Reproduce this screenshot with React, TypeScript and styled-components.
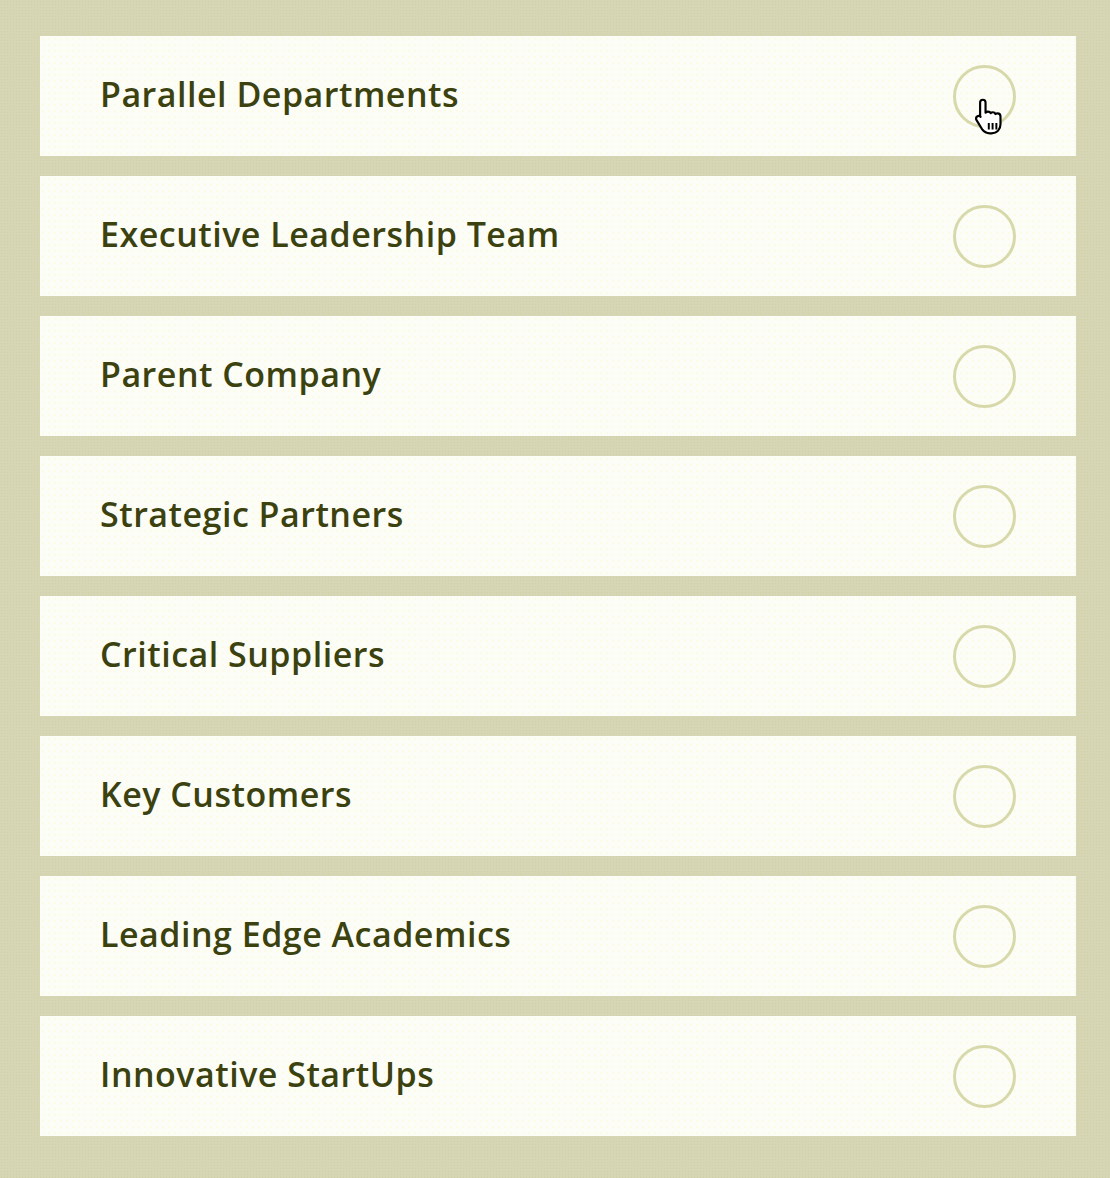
import styled, { createGlobalStyle } from "styled-components";

const GlobalStyle = createGlobalStyle`
  html, body {
    margin: 0;
    padding: 0;
  }

  body {
    background-color: #d6d5b4;
    background-image: radial-gradient(#cfcfa8 1px, transparent 1px);
    background-size: 3px 3px;
    font-family: "Open Sans", "Noto Sans", sans-serif;
  }
`;

const Page = styled.div`
  width: 1110px;
  min-height: 1178px;
  box-sizing: border-box;
  padding: 36px 34px 42px 40px;
`;

const List = styled.ul`
  list-style: none;
  margin: 0;
  padding: 0;
  display: flex;
  flex-direction: column;
  gap: 20px;
`;

const Item = styled.li`
  position: relative;
  height: 120px;
  box-sizing: border-box;
  padding: 0 60px 0 60px;
  display: flex;
  align-items: center;
  justify-content: space-between;
  background-color: #fdfdf8;
  background-image: radial-gradient(#fbfbe6 1px, transparent 1px);
  background-size: 6px 6px;
  cursor: pointer;
`;

const Label = styled.span`
  color: #3b4210;
  font-size: 34px;
  font-weight: 600;
  letter-spacing: 0.5px;
  margin-bottom: 4px;
`;

const Radio = styled.span`
  width: 63px;
  height: 63px;
  box-sizing: border-box;
  border: 3px solid #d7d9ab;
  border-radius: 50%;
`;

const Cursor = styled.svg`
  position: absolute;
  right: 67px;
  top: 61px;
  width: 35px;
  height: 39px;
  pointer-events: none;
`;

const items = [
  "Parallel Departments",
  "Executive Leadership Team",
  "Parent Company",
  "Strategic Partners",
  "Critical Suppliers",
  "Key Customers",
  "Leading Edge Academics",
  "Innovative StartUps",
];

function HandCursor() {
  return (
    <Cursor viewBox="0 0 32 36">
      <path
        d="M8 2.5c1.4 0 2.5 1.1 2.5 2.5v9.5c.6-.7 1.5-1 2.3-1 1.1 0 2 .5 2.4 1.4.5-.5 1.2-.8 2-.8 1.2 0 2.1.6 2.5 1.6.5-.4 1.1-.6 1.8-.6 1.6 0 2.8 1.3 2.8 2.9v7.2c0 4.5-3 8.3-8.3 8.3h-1.6c-3.1 0-5.1-1-6.8-3.3L2.2 21.4c-.8-1.1-.6-2.6.5-3.4 1-.8 2.4-.6 3.2.3l-.4-.4V5c0-1.4 1.1-2.5 2.5-2.5z"
        fill="#fff"
        stroke="#000"
        strokeWidth="2"
        strokeLinejoin="round"
      />
      <path d="M13.5 24v6M17 24v6M20.5 24v6" stroke="#000" strokeWidth="1.8" />
    </Cursor>
  );
}

export default function App() {
  return (
    <>
      <GlobalStyle />
      <Page>
        <List>
          {items.map((label, i) => (
            <Item key={label}>
              <Label>{label}</Label>
              <Radio />
              {i === 0 && <HandCursor />}
            </Item>
          ))}
        </List>
      </Page>
    </>
  );
}
